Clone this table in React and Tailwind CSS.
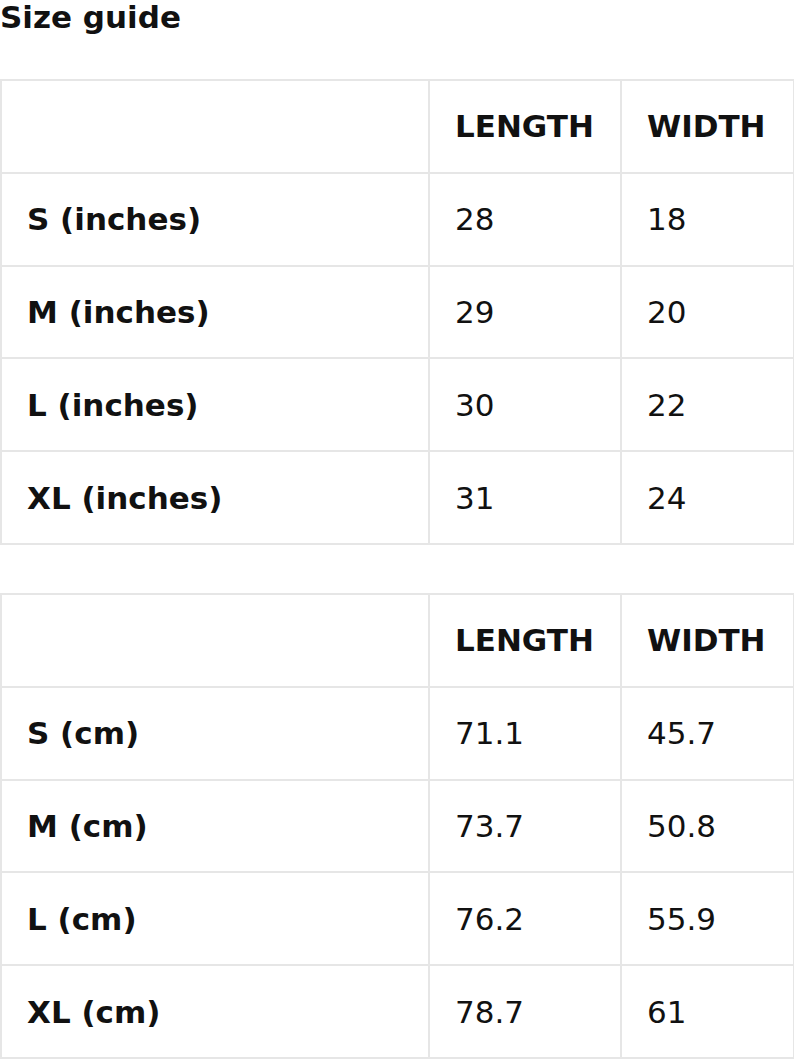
const inches = [
  ['S (inches)', '28', '18'],
  ['M (inches)', '29', '20'],
  ['L (inches)', '30', '22'],
  ['XL (inches)', '31', '24'],
]

const cm = [
  ['S (cm)', '71.1', '45.7'],
  ['M (cm)', '73.7', '50.8'],
  ['L (cm)', '76.2', '55.9'],
  ['XL (cm)', '78.7', '61'],
]

function SizeTable({ rows }) {
  const cell = 'h-[92.8px] border-2 border-[#e6e6e6] px-[25px] align-middle text-left leading-[36px]'
  return (
    <table className="w-[793px] table-fixed border-collapse">
      <colgroup>
        <col className="w-[428px]" />
        <col className="w-[192px]" />
        <col className="w-[173px]" />
      </colgroup>
      <thead>
        <tr>
          <th className={cell}></th>
          <th className={cell + ' font-bold'}>LENGTH</th>
          <th className={cell + ' font-bold'}>WIDTH</th>
        </tr>
      </thead>
      <tbody>
        {rows.map(([size, length, width]) => (
          <tr key={size}>
            <td className={cell + ' font-bold'}>{size}</td>
            <td className={cell}>{length}</td>
            <td className={cell}>{width}</td>
          </tr>
        ))}
      </tbody>
    </table>
  )
}

export default function App() {
  return (
    <div className="min-h-screen bg-white text-[#111] text-[31px] font-['DejaVu_Sans',sans-serif]">
      <h1 className="mb-[44px] text-[31px] font-bold leading-[35px]">Size guide</h1>
      <SizeTable rows={inches} />
      <div className="h-[48px]" />
      <SizeTable rows={cm} />
    </div>
  )
}
